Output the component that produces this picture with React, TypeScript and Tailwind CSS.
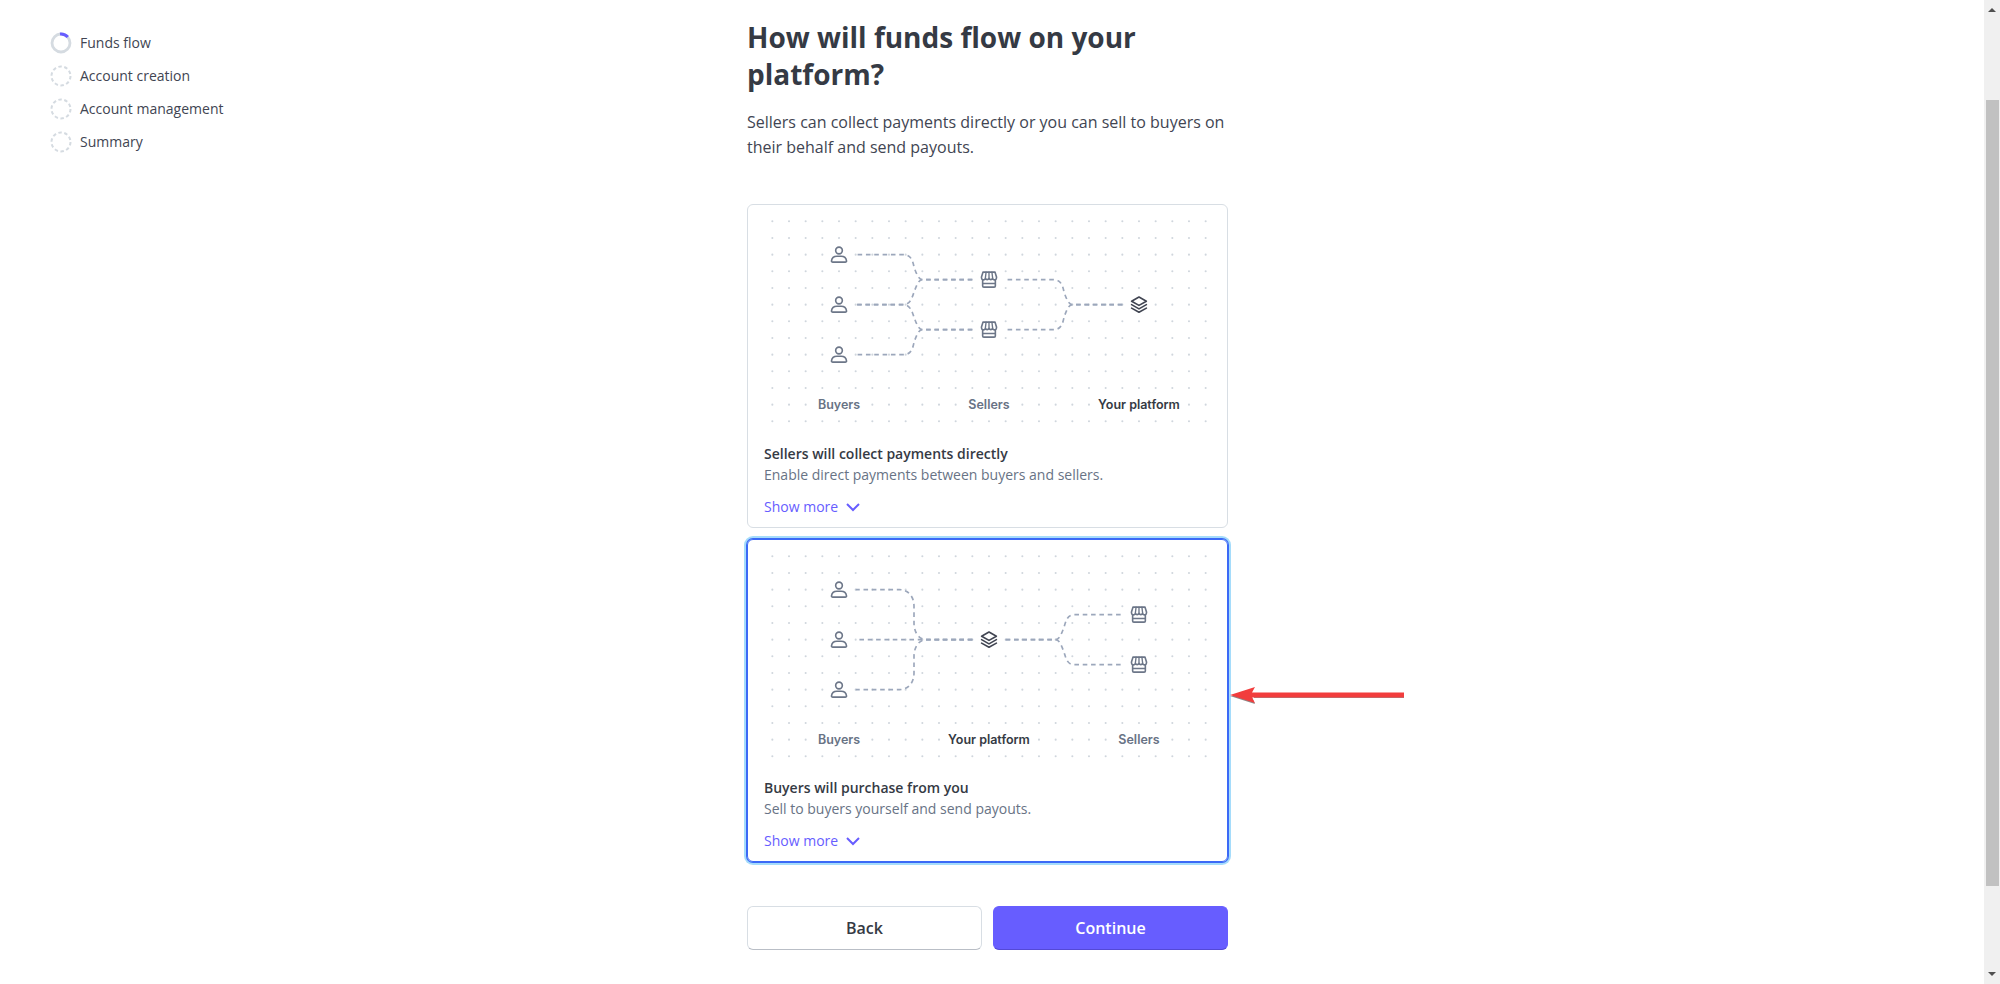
import React, { useState } from "react";

type Kind = "user" | "store" | "layers";
type Placed = { kind: Kind; x: number; y: number };
type Label = { text: string; x: number; strong?: boolean };
type Option = {
  id: string;
  title: string;
  description: string;
  nodes: Placed[];
  labels: Label[];
  paths: string[];
};

const OPTIONS: Option[] = [
  {
    id: "direct",
    title: "Sellers will collect payments directly",
    description: "Enable direct payments between buyers and sellers.",
    nodes: [
      { kind: "user", x: 72, y: 40 },
      { kind: "user", x: 72, y: 88 },
      { kind: "user", x: 72, y: 136 },
      { kind: "store", x: 216, y: 64 },
      { kind: "store", x: 216, y: 112 },
      { kind: "layers", x: 360, y: 88 },
    ],
    labels: [
      { text: "Buyers", x: 72 },
      { text: "Sellers", x: 216 },
      { text: "Your platform", x: 360, strong: true },
    ],
    paths: [
      "M200 64H152C148 64 146 57 144 52C143 46 141 40 134 40H88",
      "M200 64H152C148 64 146 71 144 76C142 82 140 88 134 88H88",
      "M200 112H152C148 112 146 105 144 100C142 94 140 88 134 88H88",
      "M200 112H152C148 112 146 119 144 124C143 130 141 136 134 136H88",
      "M344 88H296C292 88 290 81 288 76C287 70 285 64 278 64H232",
      "M344 88H296C292 88 290 95 288 100C287 106 285 112 278 112H232",
    ],
  },
  {
    id: "platform",
    title: "Buyers will purchase from you",
    description: "Sell to buyers yourself and send payouts.",
    nodes: [
      { kind: "user", x: 72, y: 40 },
      { kind: "user", x: 72, y: 88 },
      { kind: "user", x: 72, y: 136 },
      { kind: "layers", x: 216, y: 88 },
      { kind: "store", x: 360, y: 64 },
      { kind: "store", x: 360, y: 112 },
    ],
    labels: [
      { text: "Buyers", x: 72 },
      { text: "Your platform", x: 216, strong: true },
      { text: "Sellers", x: 360 },
    ],
    paths: [
      "M200 88H156C148 88 144 80 144 72V56C144 46 138 40 130 40H88",
      "M200 88H88",
      "M200 88H156C148 88 144 96 144 104V120C144 130 138 136 130 136H88",
      "M232 88H280C284 88 286 81 288 76C290 70 291 64 298 64H344",
      "M232 88H280C284 88 286 95 288 100C290 106 291 112 298 112H344",
    ],
  },
];

const STEPS = ["Funds flow", "Account creation", "Account management", "Summary"];

function Node({ kind, x, y }: Placed) {
  const stroke = kind === "layers" ? "#414552" : "#6c7688";
  return (
    <g
      transform={`translate(${x - 8} ${y - 8})`}
      fill="none"
      stroke={stroke}
      strokeWidth="1.55"
      strokeLinejoin="round"
      strokeLinecap="round"
    >
      {kind === "user" && (
        <>
          <circle cx="8" cy="4" r="3.2" />
          <path d="M2 15.2H14C14.8 15.2 15.3 14.7 15.2 13.9C14.9 11.2 12.8 9.5 10 9.5H6C3.2 9.5 1.1 11.2 0.8 13.9C0.7 14.7 1.2 15.2 2 15.2Z" />
        </>
      )}
      {kind === "store" && (
        <>
          <path d="M2.2 0.8H13.8L15.2 5.4V6.4A1.9 1.9 0 0 1 13.6 8.2A2.1 2.1 0 0 1 11.5 6.8A1.9 1.9 0 0 1 8 6.8A1.9 1.9 0 0 1 4.5 6.8A2.1 2.1 0 0 1 2.4 8.2A1.9 1.9 0 0 1 0.8 6.4V5.4Z" />
          <path d="M5.2 0.8L4.5 6.6M8 0.8V6.6M10.8 0.8L11.5 6.6" strokeWidth="1.3" />
          <path d="M1.9 8.2V14C1.9 14.8 2.3 15.2 3.1 15.2H12.9C13.7 15.2 14.1 14.8 14.1 14V8.2M2 11.7H14" />
        </>
      )}
      {kind === "layers" && (
        <>
          <path d="M8 0.7L15.1 4.7L8 8.7L0.9 4.7Z" />
          <path d="M0.9 8L8 12L15.1 8M0.9 11.3L8 15.3L15.1 11.3" />
        </>
      )}
    </g>
  );
}

function Diagram({ option }: { option: Option }) {
  const dots = [];
  for (let row = 0; row < 13; row++) {
    for (let col = 0; col < 27; col++) {
      const x = col * 16 + 8;
      const y = row * 16 + 8;
      const covered =
        option.nodes.some((n) => Math.abs(n.x - x) < 9 && Math.abs(n.y - y) < 9) ||
        (y === 184 && option.labels.some((l) => Math.abs(l.x - x) < (l.strong ? 41 : 23)));
      if (!covered) {
        dots.push(<circle key={`${row}-${col}`} cx={x} cy={y} r="1" />);
      }
    }
  }
  return (
    <svg viewBox="0 0 432 208" className="block w-full" aria-hidden="true">
      <g fill="#d0d6dd">{dots}</g>
      <g fill="none" stroke="#9ca7bb" strokeWidth="1.6" strokeDasharray="4.4 3.6">
        {option.paths.map((d) => (
          <path key={d} d={d} />
        ))}
      </g>
      {option.nodes.map((n) => (
        <Node key={`${n.x}-${n.y}`} {...n} />
      ))}
      {option.labels.map((l) => (
        <text
          key={l.text}
          x={l.x}
          y="188"
          textAnchor="middle"
          className="font-['Inter',sans-serif] text-[12px] font-semibold"
          fill={l.strong ? "#353a44" : "#687385"}
        >
          {l.text}
        </text>
      ))}
    </svg>
  );
}

function OptionCard({
  option,
  selected,
  onSelect,
}: {
  option: Option;
  selected: boolean;
  onSelect: () => void;
}) {
  return (
    <div
      className={
        selected
          ? "relative rounded-md border border-[#3b69f6] pt-2 pr-[13px] pb-2.5 pl-4 shadow-[0_0_0_1px_#3b69f6,0_0_0_3px_#a5dcfb]"
          : "relative rounded-md border border-[#d8dee4] pt-2 pr-[13px] pb-2.5 pl-4"
      }
    >
      <label className="block">
        <input
          type="radio"
          name="funds-flow"
          className="sr-only"
          checked={selected}
          onChange={onSelect}
        />
        <Diagram option={option} />
        <span className="mt-[13px] block text-[14px] leading-[21px] font-semibold text-[#353a44]">
          {option.title}
        </span>
        <span className="block text-[14px] leading-[21px] text-[#687385]">{option.description}</span>
      </label>
      <button
        type="button"
        className="mt-3 flex items-center gap-2 text-[14px] leading-5 text-[#675dff]"
      >
        Show more
        <svg
          width="14"
          height="10"
          viewBox="0 0 14 10"
          fill="none"
          stroke="currentColor"
          strokeWidth="2"
          aria-hidden="true"
        >
          <path d="M1 2L7 8L13 2" />
        </svg>
      </button>
      {selected && (
        <svg
          className="absolute top-36 left-full"
          width="178"
          height="22"
          viewBox="-2 0 178 22"
          aria-hidden="true"
        >
          <path d="M25 13H175V14H25Z" fill="#9c8f8f" />
          <path d="M1 12L26 20L23 13V11Z" fill="#8f8686" />
          <path d="M1 11L26 3L23 8.500H175V13.500H23L26 19Z" fill="#f23d3d" />
        </svg>
      )}
    </div>
  );
}

export default function App() {
  const [selected, setSelected] = useState("platform");
  return (
    <div className="flex min-h-screen bg-white font-['Open_Sans',sans-serif] text-[#414552]">
      <div className="grid flex-1 grid-cols-[1fr_481px_1fr] pr-[9px]">
        <nav className="pt-[33px] pl-[50px]">
          <ol className="flex flex-col gap-[13px]">
            {STEPS.map((step, i) => (
              <li key={step} className="flex h-5 items-center gap-2 text-[14px] leading-5">
                <svg width="22" height="22" viewBox="0 0 22 22" fill="none" strokeWidth="2" aria-hidden="true">
                  {i === 0 ? (
                    <>
                      <circle cx="11" cy="11" r="9" stroke="#d5dbe1" strokeWidth="2.800" />
                      <path d="M10 2A9 9 0 0 1 17.800 5" stroke="#675dff" strokeWidth="3" />
                    </>
                  ) : (
                    <circle cx="11" cy="11" r="9.500" stroke="#d5dbe1" strokeDasharray="3.480 2.490" />
                  )}
                </svg>
                {step}
              </li>
            ))}
          </ol>
        </nav>
        <main className="pt-[19px]">
          <h1 className="text-[28px] leading-[37px] font-bold text-[#353a44]">
            How will funds flow on your platform?
          </h1>
          <p className="mt-[17px] text-[16px] leading-[25px]">
            Sellers can collect payments directly or you can sell to buyers on their behalf and send
            payouts.
          </p>
          <div className="mt-11 flex flex-col gap-[11px]">
            {OPTIONS.map((o) => (
              <OptionCard
                key={o.id}
                option={o}
                selected={selected === o.id}
                onSelect={() => setSelected(o.id)}
              />
            ))}
          </div>
          <div className="mt-11 grid grid-cols-2 gap-[11px] text-[16px] font-semibold">
            <button
              type="button"
              className="h-11 rounded-md border border-[#d8dee4] border-b-[#b9bec6] text-[#353a44]"
            >
              Back
            </button>
            <button
              type="button"
              className="h-11 rounded-md border border-[#675dff] border-b-[#5449d6] bg-[#675dff] text-white"
            >
              Continue
            </button>
          </div>
        </main>
      </div>
      <div className="flex w-4 flex-col items-center bg-[#f0f0f0] py-2" aria-hidden="true">
        <svg width="8" height="4" viewBox="0 0 8 4" fill="#505050">
          <path d="M0 4L4 0L8 4Z" />
        </svg>
        <div className="mt-[88px] mb-[86px] w-[13px] flex-1 bg-[#c1c1c1]" />
        <svg width="8" height="4" viewBox="0 0 8 4" fill="#505050">
          <path d="M0 0L4 4L8 0Z" />
        </svg>
      </div>
    </div>
  );
}
